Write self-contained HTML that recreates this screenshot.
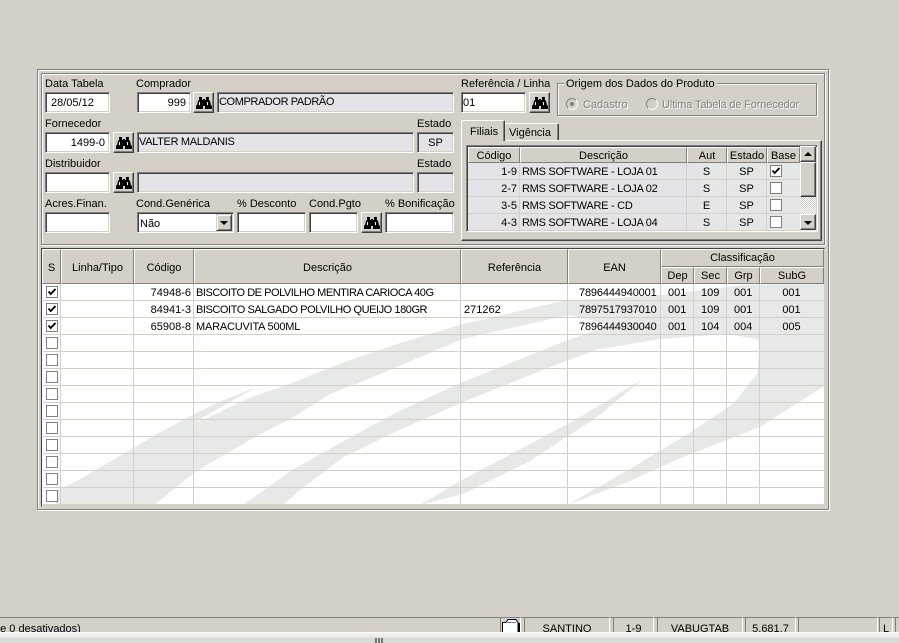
<!DOCTYPE html>
<html lang="pt"><head><meta charset="utf-8"><title>Tabela</title>
<style>
html,body{margin:0;padding:0;background:#d4d0c8;}
body{position:relative;width:899px;height:643px;overflow:hidden;font:11px/17px "Liberation Sans",sans-serif;color:#000;}
div{box-sizing:border-box;}
.a{position:absolute;}
.t{position:absolute;white-space:nowrap;}
.r{text-align:right;}.c{text-align:center;}
.n{letter-spacing:-.15px;}
.f{position:absolute;height:21px;background:#fff;border:1px solid;border-color:#808080 #fff #fff #808080;box-shadow:inset 1px 1px 0 #404040,inset -1px -1px 0 #d4d0c8;}
.d{background:#e6e3e8;}
.b{position:absolute;width:21px;height:21px;background:#d4d0c8;border:1px solid;border-color:#fff #404040 #404040 #fff;box-shadow:inset -1px -1px 0 #808080;}
.b svg{position:absolute;left:2px;top:3px;}
.h{position:absolute;background:#d4d0c8;border-left:1px solid #fff;border-top:1px solid #fff;border-right:1px solid #808080;border-bottom:1px solid #808080;text-align:center;white-space:nowrap;}
.v{position:absolute;width:1px;background:#d4d0c8;}
.ck{position:absolute;width:12px;height:12px;background:#fff;border:1px solid #808080;}
.ck svg{position:absolute;left:0;top:0;}
.g{color:#808080;text-shadow:1px 1px 0 #fff;}
.s{position:absolute;top:617px;height:16px;border-left:1px solid #808080;border-top:1px solid #808080;border-right:1px solid #fff;text-align:center;white-space:nowrap;padding-top:3px;}
</style></head><body>
<svg width="0" height="0" style="position:absolute"><defs>
<symbol id="bn" viewBox="0 0 16 14"><path fill="#000" d="M3 1h3v3h1V3h2v1h1V1h3v3l1 1 1 4 1 1v3H9v-3H7v3H0v-3l1-1 1-4 1-1z"/><path fill="#fff" d="M3 6h1v3H3zM11 6h1v3h-1z"/></symbol>
<symbol id="cm" viewBox="0 0 10 10"><path fill="none" stroke="#000" stroke-width="1.8" d="M1.5 4.5l2.2 2.5 4.8-5"/></symbol>
</defs></svg>

<!-- outer frames -->
<div class="a" style="left:37px;top:69px;width:792px;height:441px;border:1px solid #808080;box-shadow:inset 1px 1px 0 #fff,1px 1px 0 #fff;"></div>
<div class="a" style="left:41px;top:73px;width:784px;height:172px;border:1px solid #808080;box-shadow:inset 1px 1px 0 #fff,1px 1px 0 #fff;"></div>

<!-- labels -->
<div class="t" style="left:45px;top:76px;">Data Tabela</div>
<div class="t" style="left:136px;top:76px;">Comprador</div>
<div class="t" style="left:461px;top:76px;">Referência / Linha</div>
<div class="t" style="left:45px;top:116px;">Fornecedor</div>
<div class="t" style="left:417px;top:116px;">Estado</div>
<div class="t" style="left:45px;top:156px;">Distribuidor</div>
<div class="t" style="left:417px;top:156px;">Estado</div>
<div class="t" style="left:45px;top:196px;">Acres.Finan.</div>
<div class="t" style="left:136px;top:196px;">Cond.Genérica</div>
<div class="t" style="left:237px;top:196px;">% Desconto</div>
<div class="t" style="left:309px;top:196px;">Cond.Pgto</div>
<div class="t" style="left:385px;top:196px;">% Bonificação</div>

<!-- fields row 1 -->
<div class="f" style="left:45px;top:92px;width:65px;"></div>
<div class="t" style="left:51px;top:95px;">28/05/12</div>
<div class="f" style="left:137px;top:92px;width:54px;"></div>
<div class="t r" style="left:137px;top:95px;width:49px;">999</div>
<div class="b" style="left:193px;top:92px;"><svg width="16" height="14"><use href="#bn"/></svg></div>
<div class="f d" style="left:217px;top:92px;width:237px;"></div>
<div class="t" style="left:219px;top:94px;letter-spacing:-.4px;">COMPRADOR PADRÃO</div>
<div class="f" style="left:461px;top:92px;width:65px;"></div>
<div class="t" style="left:463px;top:95px;">01</div>
<div class="b" style="left:529px;top:92px;"><svg width="16" height="14"><use href="#bn"/></svg></div>

<!-- group box -->
<div class="a" style="left:557px;top:83px;width:260px;height:33px;border:1px solid #808080;box-shadow:inset 1px 1px 0 #fff,1px 1px 0 #fff;"></div>
<div class="t" style="left:564px;top:76px;background:#d4d0c8;padding:0 2px;height:15px;">Origem dos Dados do Produto</div>
<div class="a" style="left:566px;top:98px;width:12px;height:12px;border-radius:50%;border:1px solid #808080;border-right-color:#fff;border-bottom-color:#fff;background:#d4d0c8;"><div class="a" style="left:3px;top:3px;width:4px;height:4px;border-radius:50%;background:#808080;"></div></div>
<div class="t g" style="left:583px;top:97px;">Cadastro</div>
<div class="a" style="left:646px;top:98px;width:12px;height:12px;border-radius:50%;border:1px solid #808080;border-right-color:#fff;border-bottom-color:#fff;background:#d4d0c8;"></div>
<div class="t g" style="left:662px;top:97px;letter-spacing:-.15px;">Ultima Tabela de Fornecedor</div>

<!-- row 2 -->
<div class="f" style="left:45px;top:132px;width:65px;"></div>
<div class="t r" style="left:45px;top:135px;width:60px;">1499-0</div>
<div class="b" style="left:113px;top:132px;"><svg width="16" height="14"><use href="#bn"/></svg></div>
<div class="f d" style="left:137px;top:132px;width:277px;"></div>
<div class="t" style="left:139px;top:134px;letter-spacing:-.33px;">VALTER MALDANIS</div>
<div class="f d" style="left:417px;top:132px;width:37px;"></div>
<div class="t c" style="left:417px;top:135px;width:37px;">SP</div>

<!-- row 3 -->
<div class="f" style="left:45px;top:172px;width:65px;"></div>
<div class="b" style="left:113px;top:172px;"><svg width="16" height="14"><use href="#bn"/></svg></div>
<div class="f d" style="left:137px;top:172px;width:277px;"></div>
<div class="f d" style="left:417px;top:172px;width:37px;"></div>

<!-- row 4 -->
<div class="f" style="left:45px;top:212px;width:65px;"></div>
<div class="f" style="left:137px;top:212px;width:97px;"></div>
<div class="t" style="left:140px;top:216px;">Não</div>
<div class="a" style="left:216px;top:214px;width:16px;height:17px;background:#d4d0c8;border:1px solid;border-color:#d4d0c8 #404040 #404040 #d4d0c8;box-shadow:inset 1px 1px 0 #fff,inset -1px -1px 0 #808080;"><div class="a" style="left:3px;top:6px;width:0;height:0;border:4px solid transparent;border-top-color:#000;border-bottom:0;"></div></div>
<div class="f" style="left:237px;top:212px;width:69px;"></div>
<div class="f" style="left:309px;top:212px;width:49px;"></div>
<div class="b" style="left:361px;top:212px;"><svg width="16" height="14"><use href="#bn"/></svg></div>
<div class="f" style="left:385px;top:212px;width:69px;"></div>

<!-- tabs -->
<div class="a" style="left:461px;top:140px;width:361px;height:101px;border:1px solid;border-color:#fff #404040 #404040 #fff;box-shadow:inset -1px -1px 0 #808080;"></div>
<div class="a" style="left:504px;top:123px;width:55px;height:17px;border:1px solid;border-bottom:0;border-color:#fff #404040 #fff #fff;box-shadow:inset -1px 0 0 #808080;border-radius:2px 2px 0 0;"></div>
<div class="t" style="left:509px;top:125px;">Vigência</div>
<div class="a" style="left:461px;top:120px;width:44px;height:21px;background:#d4d0c8;border:1px solid;border-bottom:0;border-color:#fff #404040 #fff #fff;box-shadow:inset -1px 0 0 #808080;border-radius:2px 2px 0 0;"></div>
<div class="t" style="left:470px;top:124px;">Filiais</div>

<!-- branch grid -->
<div class="a" style="left:466px;top:145px;width:352px;height:87px;border:1px solid;border-color:#808080 #fff #fff #808080;box-shadow:inset 1px 1px 0 #404040,inset -1px -1px 0 #d4d0c8;"></div>
<div class="a" style="left:468px;top:163px;width:332px;height:68px;background:#e6e3e8;"></div>
<div class="a" style="left:700px;top:163px;width:100px;height:68px;background:#e4e7e4;"></div>
<div class="a" style="left:468px;top:179px;width:332px;height:1px;background:#d4d0c8;"></div>
<div class="a" style="left:468px;top:196px;width:332px;height:1px;background:#d4d0c8;"></div>
<div class="a" style="left:468px;top:213px;width:332px;height:1px;background:#d4d0c8;"></div>
<div class="a" style="left:468px;top:230px;width:332px;height:1px;background:#d4d0c8;"></div>
<div class="v" style="left:519px;top:163px;height:68px;"></div>
<div class="v" style="left:686px;top:163px;height:68px;"></div>
<div class="v" style="left:726px;top:163px;height:68px;"></div>
<div class="v" style="left:766px;top:163px;height:68px;"></div>
<div class="h" style="left:468px;top:147px;width:52px;height:16px;">Código</div>
<div class="h" style="left:520px;top:147px;width:167px;height:16px;">Descrição</div>
<div class="h" style="left:687px;top:147px;width:40px;height:16px;">Aut</div>
<div class="h" style="left:727px;top:147px;width:40px;height:16px;">Estado</div>
<div class="h" style="left:767px;top:147px;width:33px;height:16px;">Base</div>
<!-- scrollbar -->
<div class="a" style="left:800px;top:146px;width:16px;height:85px;background-image:conic-gradient(#fff 25%,#d4d0c8 0 50%,#fff 0 75%,#d4d0c8 0);background-size:2px 2px;"></div>
<div class="a" style="left:800px;top:146px;width:16px;height:16px;background:#d4d0c8;border:1px solid;border-color:#fff #404040 #404040 #fff;box-shadow:inset -1px -1px 0 #808080;"><div class="a" style="left:3px;top:5px;width:0;height:0;border:4px solid transparent;border-bottom-color:#000;border-top:0;"></div></div>
<div class="a" style="left:800px;top:162px;width:16px;height:35px;background:#d4d0c8;border:1px solid;border-color:#fff #404040 #404040 #fff;box-shadow:inset -1px -1px 0 #808080;"></div>
<div class="a" style="left:800px;top:214px;width:16px;height:16px;background:#d4d0c8;border:1px solid;border-color:#fff #404040 #404040 #fff;box-shadow:inset -1px -1px 0 #808080;"><div class="a" style="left:3px;top:6px;width:0;height:0;border:4px solid transparent;border-top-color:#000;border-bottom:0;"></div></div>

<div class="t r" style="left:468px;top:164px;width:49px;">1-9</div><div class="t" style="left:522px;top:164px;letter-spacing:-.27px;">RMS SOFTWARE - LOJA 01</div><div class="t c" style="left:687px;top:164px;width:39px;">S</div><div class="t c" style="left:727px;top:164px;width:39px;">SP</div>
<div class="t r" style="left:468px;top:181px;width:49px;">2-7</div><div class="t" style="left:522px;top:181px;letter-spacing:-.27px;">RMS SOFTWARE - LOJA 02</div><div class="t c" style="left:687px;top:181px;width:39px;">S</div><div class="t c" style="left:727px;top:181px;width:39px;">SP</div>
<div class="t r" style="left:468px;top:198px;width:49px;">3-5</div><div class="t" style="left:522px;top:198px;letter-spacing:-.27px;">RMS SOFTWARE - CD</div><div class="t c" style="left:687px;top:198px;width:39px;">E</div><div class="t c" style="left:727px;top:198px;width:39px;">SP</div>
<div class="t r" style="left:468px;top:215px;width:49px;">4-3</div><div class="t" style="left:522px;top:215px;letter-spacing:-.27px;">RMS SOFTWARE - LOJA 04</div><div class="t c" style="left:687px;top:215px;width:39px;">S</div><div class="t c" style="left:727px;top:215px;width:39px;">SP</div>
<div class="ck" style="left:770px;top:165px;"><svg width="10" height="10"><use href="#cm"/></svg></div>
<div class="ck" style="left:770px;top:182px;"></div>
<div class="ck" style="left:770px;top:199px;"></div>
<div class="ck" style="left:770px;top:216px;"></div>

<!-- main grid -->
<div class="a" style="left:41px;top:248px;width:784px;height:259px;background:#fff;border:1px solid;border-color:#404040 #d4d0c8 #d4d0c8 #404040;"></div>
<svg class="a" style="left:43px;top:284px;" width="781" height="221" viewBox="43 284 781 221">
<path fill="#e6e9e6" d="M55 505L59 489 75 482 125 453 155 435 192 415 219 402 257 387 235 399 192 424 209 417 249 398 292 383 342 363 397 344 463 324 563 301 660 295 743 285 824 283V386L760 427 683 457 630 481 567 505 630 469 683 437 733 404 757 374 760 344 757 339 727 334 660 339 600 349 563 362 463 402 397 431 342 458 300 490 283 505H243L292 470 342 442 397 412 463 382 513 362 563 342 610 325 570 315 497 331 463 339 363 381 330 394 292 418 255 437 195 472 154 505Z"/>
<path fill="#e6e9e6" d="M420 505L460 481 530 444 580 417 643 379 597 417 530 461 463 494Z"/>
</svg>
<div class="a" style="left:43px;top:300px;width:781px;height:205px;background:repeating-linear-gradient(to bottom,#d4d0c8 0,#d4d0c8 1px,transparent 1px,transparent 17px);"></div>
<div class="v" style="left:60px;top:284px;height:221px;"></div>
<div class="v" style="left:133px;top:284px;height:221px;"></div>
<div class="v" style="left:193px;top:284px;height:221px;"></div>
<div class="v" style="left:460px;top:284px;height:221px;"></div>
<div class="v" style="left:567px;top:284px;height:221px;"></div>
<div class="v" style="left:660px;top:284px;height:221px;"></div>
<div class="v" style="left:693px;top:284px;height:221px;"></div>
<div class="v" style="left:726px;top:284px;height:221px;"></div>
<div class="v" style="left:759px;top:284px;height:221px;"></div>
<div class="a" style="left:43px;top:504px;width:781px;height:2px;background:#d4d0c8;"></div>

<div class="h" style="left:42px;top:249px;width:19px;height:35px;padding-top:10px;">S</div>
<div class="h" style="left:61px;top:249px;width:73px;height:35px;padding-top:10px;">Linha/Tipo</div>
<div class="h" style="left:134px;top:249px;width:60px;height:35px;padding-top:10px;">Código</div>
<div class="h" style="left:194px;top:249px;width:267px;height:35px;padding-top:10px;">Descrição</div>
<div class="h" style="left:461px;top:249px;width:107px;height:35px;padding-top:10px;">Referência</div>
<div class="h" style="left:568px;top:249px;width:93px;height:35px;padding-top:10px;">EAN</div>
<div class="h" style="left:661px;top:249px;width:163px;height:18px;padding-top:0;">Classificação</div>
<div class="h" style="left:661px;top:267px;width:33px;height:17px;">Dep</div>
<div class="h" style="left:694px;top:267px;width:33px;height:17px;">Sec</div>
<div class="h" style="left:727px;top:267px;width:33px;height:17px;">Grp</div>
<div class="h" style="left:760px;top:267px;width:64px;height:17px;">SubG</div>

<div class="t r" style="left:134px;top:285px;width:57px;">74948-6</div><div class="t" style="left:196px;top:285px;letter-spacing:-.47px;">BISCOITO DE POLVILHO MENTIRA CARIOCA 40G</div><div class="t n" style="left:579px;top:285px;">7896444940001</div><div class="t" style="left:668px;top:285px;">001</div><div class="t" style="left:701px;top:285px;">109</div><div class="t" style="left:734px;top:285px;">001</div><div class="t c" style="left:760px;top:285px;width:63px;">001</div>
<div class="t r" style="left:134px;top:302px;width:57px;">84941-3</div><div class="t" style="left:196px;top:302px;letter-spacing:-.44px;">BISCOITO SALGADO POLVILHO QUEIJO 180GR</div><div class="t" style="left:464px;top:302px;">271262</div><div class="t n" style="left:579px;top:302px;">7897517937010</div><div class="t" style="left:668px;top:302px;">001</div><div class="t" style="left:701px;top:302px;">109</div><div class="t" style="left:734px;top:302px;">001</div><div class="t c" style="left:760px;top:302px;width:63px;">001</div>
<div class="t r" style="left:134px;top:319px;width:57px;">65908-8</div><div class="t" style="left:196px;top:319px;letter-spacing:-.2px;">MARACUVITA 500ML</div><div class="t n" style="left:579px;top:319px;">7896444930040</div><div class="t" style="left:668px;top:319px;">001</div><div class="t" style="left:701px;top:319px;">104</div><div class="t" style="left:734px;top:319px;">004</div><div class="t c" style="left:760px;top:319px;width:63px;">005</div>

<div class="ck" style="left:46px;top:286px;"><svg width="10" height="10"><use href="#cm"/></svg></div>
<div class="ck" style="left:46px;top:303px;"><svg width="10" height="10"><use href="#cm"/></svg></div>
<div class="ck" style="left:46px;top:320px;"><svg width="10" height="10"><use href="#cm"/></svg></div>
<div class="ck" style="left:46px;top:337px;"></div>
<div class="ck" style="left:46px;top:354px;"></div>
<div class="ck" style="left:46px;top:371px;"></div>
<div class="ck" style="left:46px;top:388px;"></div>
<div class="ck" style="left:46px;top:405px;"></div>
<div class="ck" style="left:46px;top:422px;"></div>
<div class="ck" style="left:46px;top:439px;"></div>
<div class="ck" style="left:46px;top:456px;"></div>
<div class="ck" style="left:46px;top:473px;"></div>
<div class="ck" style="left:46px;top:490px;"></div>

<!-- status bar -->
<div class="a" style="left:0;top:617px;width:899px;height:1px;background:#808080;"></div>
<div class="t" style="left:-6px;top:621px;">de 0 desativados)</div>
<div class="s" style="left:500px;width:21px;"></div>
<svg class="a" style="left:501px;top:618px;" width="19" height="15"><path d="M1.5 15V4.5H5L7 1.5H15L17 4.5V15" fill="#fff" stroke="#000"/><path d="M5 4.5H15" stroke="#808080"/><path d="M18 5V15" stroke="#000" stroke-width="2"/></svg>
<div class="s" style="left:524px;width:86px;">SANTINO</div>
<div class="s" style="left:613px;width:41px;">1-9</div>
<div class="s" style="left:657px;width:86px;">VABUGTAB</div>
<div class="s" style="left:745px;width:51px;">5.681,7</div>
<div class="s" style="left:798px;width:80px;"></div>
<div class="s" style="left:879px;width:14px;text-align:left;padding-left:3px;">L</div>
<div class="s" style="left:895px;width:6px;"></div>
<div class="a" style="left:0;top:632px;width:899px;height:11px;background:linear-gradient(to bottom,#fff 0,#fff 1px,#f1f1ef 1px,#ececea 5px,#d9d8d4 6px,#dcdbd8 11px);"></div>
<div class="a" style="left:375px;top:638px;width:2px;height:5px;background:#777;"></div>
<div class="a" style="left:378px;top:638px;width:2px;height:5px;background:#777;"></div>
<div class="a" style="left:381px;top:638px;width:2px;height:5px;background:#777;"></div>
</body></html>
